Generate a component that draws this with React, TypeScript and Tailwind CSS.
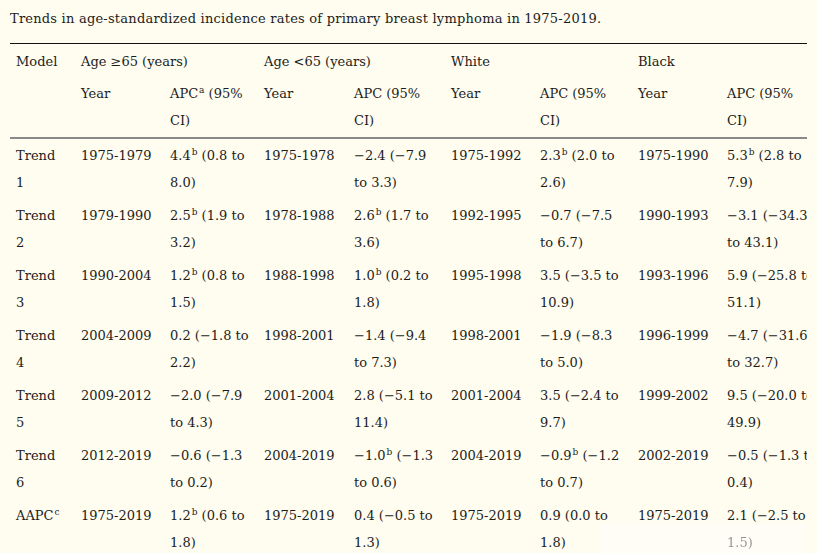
import React from 'react';

type Cell = React.ReactNode;

const Sup = ({ c }: { c: string }) => (
  <sup className="text-[9px] -top-[5px] ml-[1px]">{c}</sup>
);

const two = (a: React.ReactNode, b: React.ReactNode) => (
  <>
    <span className="whitespace-nowrap">{a}</span>
    <br />
    <span className="whitespace-nowrap">{b}</span>
  </>
);

const ROWS: Cell[][] = [
  [two('Trend', '1'), '1975-1979', two(<>4.4<Sup c="b" /> (0.8 to</>, '8.0)'), '1975-1978', two('−2.4 (−7.9', 'to 3.3)'), '1975-1992', two(<>2.3<Sup c="b" /> (2.0 to</>, '2.6)'), '1975-1990', two(<>5.3<Sup c="b" /> (2.8 to</>, '7.9)')],
  [two('Trend', '2'), '1979-1990', two(<>2.5<Sup c="b" /> (1.9 to</>, '3.2)'), '1978-1988', two(<>2.6<Sup c="b" /> (1.7 to</>, '3.6)'), '1992-1995', two('−0.7 (−7.5', 'to 6.7)'), '1990-1993', two('−3.1 (−34.3', 'to 43.1)')],
  [two('Trend', '3'), '1990-2004', two(<>1.2<Sup c="b" /> (0.8 to</>, '1.5)'), '1988-1998', two(<>1.0<Sup c="b" /> (0.2 to</>, '1.8)'), '1995-1998', two('3.5 (−3.5 to', '10.9)'), '1993-1996', two('5.9 (−25.8 to', '51.1)')],
  [two('Trend', '4'), '2004-2009', two('0.2 (−1.8 to', '2.2)'), '1998-2001', two('−1.4 (−9.4', 'to 7.3)'), '1998-2001', two('−1.9 (−8.3', 'to 5.0)'), '1996-1999', two('−4.7 (−31.6', 'to 32.7)')],
  [two('Trend', '5'), '2009-2012', two('−2.0 (−7.9', 'to 4.3)'), '2001-2004', two('2.8 (−5.1 to', '11.4)'), '2001-2004', two('3.5 (−2.4 to', '9.7)'), '1999-2002', two('9.5 (−20.0 to', '49.9)')],
  [two('Trend', '6'), '2012-2019', two('−0.6 (−1.3', 'to 0.2)'), '2004-2019', two(<>−1.0<Sup c="b" /> (−1.3</>, 'to 0.6)'), '2004-2019', two(<>−0.9<Sup c="b" /> (−1.2</>, 'to 0.7)'), '2002-2019', two('−0.5 (−1.3 to', '0.4)')],
  [<>AAPC<Sup c="c" /></>, '1975-2019', two(<>1.2<Sup c="b" /> (0.6 to</>, '1.8)'), '1975-2019', two('0.4 (−0.5 to', '1.3)'), '1975-2019', two('0.9 (0.0 to', '1.8)'), '1975-2019', two('2.1 (−2.5 to', <span className="opacity-80 blur-[0.5px]">1.5)</span>)],
];

const WIDTHS = [65, 89, 94, 90, 97, 89, 98, 89, 110];

export default function App() {
  return (
    <div
      className="w-[817px] h-[553px] overflow-hidden bg-[#fffcf0] text-[#1c1c1c] text-[13px] leading-[27px]"
      style={{ fontFamily: '"DejaVu Serif", "Liberation Serif", serif' }}
    >
      <div className="pl-[10px] pt-[5px] mb-[11px] tracking-[0.22px]">
        Trends in age-standardized incidence rates of primary breast lymphoma in 1975-2019.
      </div>
      <div className="relative ml-[10px] w-[797px] overflow-hidden">
        <table className="table-fixed border-collapse w-[821px]">
          <colgroup>
            {WIDTHS.map((w, i) => (
              <col key={i} style={{ width: w }} />
            ))}
          </colgroup>
          <thead>
            <tr className="border-t-[1.5px] border-[#111]">
              <th className="text-left font-normal align-top px-[6px] pt-[4px] pb-[2px]">Model</th>
              <th colSpan={2} className="text-left font-normal align-top px-[6px] pt-[4px] pb-[2px]">Age ≥65 (years)</th>
              <th colSpan={2} className="text-left font-normal align-top px-[6px] pt-[4px] pb-[2px]">Age &lt;65 (years)</th>
              <th colSpan={2} className="text-left font-normal align-top px-[6px] pt-[4px] pb-[2px]">White</th>
              <th colSpan={2} className="text-left font-normal align-top px-[6px] pt-[4px] pb-[2px]">Black</th>
            </tr>
            <tr className="border-b-[2px] border-[#8a8a8a]">
              <th className="px-[6px]"></th>
              <th className="text-left font-normal align-top px-[6px] pt-[3px] pb-[3px]">Year</th>
              <th className="text-left font-normal align-top px-[6px] pt-[3px] pb-[3px]">{two(<>APC<Sup c="a" /> (95%</>, 'CI)')}</th>
              <th className="text-left font-normal align-top px-[6px] pt-[3px] pb-[3px]">Year</th>
              <th className="text-left font-normal align-top px-[6px] pt-[3px] pb-[3px]">{two('APC (95%', 'CI)')}</th>
              <th className="text-left font-normal align-top px-[6px] pt-[3px] pb-[3px]">Year</th>
              <th className="text-left font-normal align-top px-[6px] pt-[3px] pb-[3px]">{two('APC (95%', 'CI)')}</th>
              <th className="text-left font-normal align-top px-[6px] pt-[3px] pb-[3px]">Year</th>
              <th className="text-left font-normal align-top px-[6px] pt-[3px] pb-[3px]">{two('APC (95%', 'CI)')}</th>
            </tr>
          </thead>
          <tbody>
            {ROWS.map((row, r) => (
              <tr key={r}>
                {row.map((cell, c) => (
                  <td key={c} className="align-top px-[6px] pt-[3px] pb-[3px] whitespace-nowrap">
                    {cell}
                  </td>
                ))}
              </tr>
            ))}
          </tbody>
        </table>
        <div className="absolute right-[2px] bottom-0 w-[205px] h-[36px] bg-white/40" />
      </div>
    </div>
  );
}
